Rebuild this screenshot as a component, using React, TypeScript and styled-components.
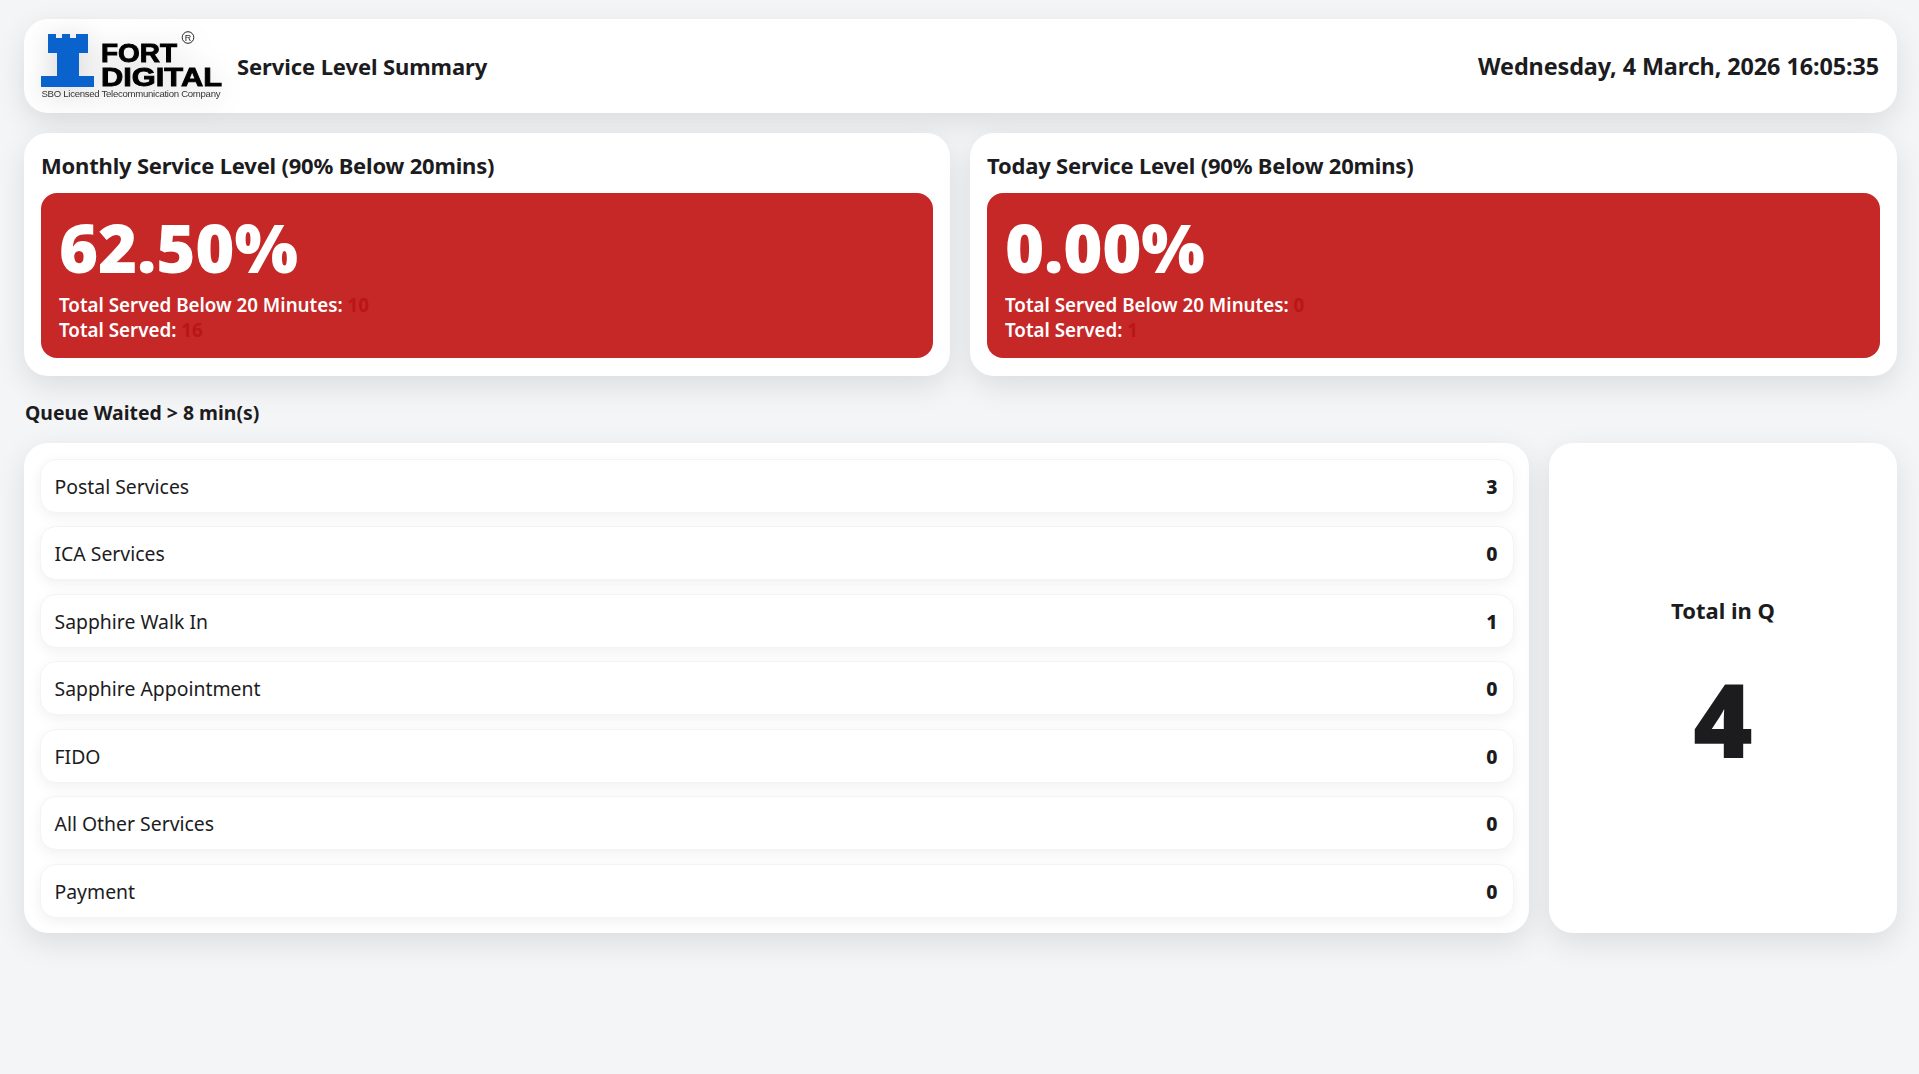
import { createGlobalStyle } from "styled-components";
import styled from "styled-components";

const GlobalStyle = createGlobalStyle`
  html, body {
    margin: 0;
    padding: 0;
    background: #f4f5f7;
    color: #1c1c1e;
    font-family: "Noto Sans", "Open Sans", "Liberation Sans", sans-serif;
  }
`;

const Page = styled.div`
  box-sizing: border-box;
  min-height: 1074px;
  padding: 19px 22px 0 24px;
`;

const Card = styled.section`
  background: #fff;
  border-radius: 24px;
  box-shadow: 0 10px 30px rgba(0, 0, 0, 0.1);
`;

const Header = styled(Card)`
  height: 94px;
  display: flex;
  align-items: center;
  justify-content: space-between;
  padding: 0 18px 0 17px;
`;

const Brand = styled.div`
  display: flex;
  align-items: center;
  gap: 14px;
`;

const LogoBox = styled.div`
  width: 182px;
  height: 72px;
  filter: drop-shadow(0 4px 14px rgba(0, 0, 0, 0.16));
`;

const LogoArt = styled.svg`
  display: block;
  overflow: visible;
`;

const PageTitle = styled.h1`
  margin: 0;
  font-size: 22px;
  font-weight: 700;
  letter-spacing: -0.1px;
`;

const Clock = styled.div`
  font-size: 23.4px;
  font-weight: 700;
  letter-spacing: -0.1px;
`;

const LevelGrid = styled.div`
  display: grid;
  grid-template-columns: 926px 1fr;
  gap: 20px;
  margin-top: 20px;
`;

const LevelCard = styled(Card)`
  padding: 16px 17.5px 18px 17px;
  height: 243px;
  box-sizing: border-box;
`;

const LevelTitle = styled.h2`
  margin: 0 0 11px;
  font-size: 22px;
  line-height: 33px;
  font-weight: 700;
  letter-spacing: -0.2px;
`;

const LevelPanel = styled.div`
  background: #c62828;
  color: #fff;
  border-radius: 16px;
  height: 165px;
  box-sizing: border-box;
  padding: 12px 18px;
`;

const Percent = styled.div`
  font-size: 67px;
  line-height: 84px;
  font-weight: 900;
  letter-spacing: -0.2px;
  margin-bottom: 4px;
`;

const PanelLine = styled.div`
  font-size: 18.8px;
  line-height: 25px;
  font-weight: 600;
`;

const DimValue = styled.span`
  color: #ba1616;
  font-weight: 700;
`;

const QueueHeading = styled.h3`
  margin: 22px 0 15px 1px;
  font-size: 19.4px;
  line-height: 30px;
  font-weight: 700;
`;

const QueueGrid = styled.div`
  display: grid;
  grid-template-columns: 1505px 1fr;
  gap: 20px;
`;

const QueueList = styled(Card)`
  display: flex;
  flex-direction: column;
  gap: 13.6px;
  padding: 15.5px 15.5px 15.5px 16px;
  height: 490px;
  box-sizing: border-box;
`;

const QueueRow = styled.div`
  height: 54px;
  flex: none;
  box-sizing: border-box;
  display: flex;
  align-items: center;
  justify-content: space-between;
  padding: 1px 15px 0 13.5px;
  border-radius: 16px;
  border: 1px solid #f4f4f5;
  background: #fff;
  box-shadow: 0 4px 14px rgba(0, 0, 0, 0.06);
  font-size: 19.4px;
`;

const QueueCount = styled.span`
  font-weight: 800;
`;

const TotalCard = styled(Card)`
  display: flex;
  flex-direction: column;
  align-items: center;
  justify-content: center;
  padding-top: 3px;
`;

const TotalLabel = styled.div`
  font-size: 22px;
  font-weight: 700;
  margin-bottom: 29px;
`;

const TotalValue = styled.div`
  font-size: 102px;
  line-height: 130px;
  font-weight: 900;
`;

const rows = [
  ["Postal Services", 3],
  ["ICA Services", 0],
  ["Sapphire Walk In", 1],
  ["Sapphire Appointment", 0],
  ["FIDO", 0],
  ["All Other Services", 0],
  ["Payment", 0],
] as const;

function Logo() {
  return (
    <LogoArt width="182" height="72" viewBox="41 30 182 72">
      <path
        d="M48 34h8v4h6v-4h8v4h6v-4h12v19h-9v23h15v11H41V76h16V53h-9z"
        fill="#0a62cc"
      />
      <text x="101" y="62" fontFamily="Liberation Sans" fontWeight="700" fontSize="25" textLength="76" lengthAdjust="spacingAndGlyphs" stroke="#000" strokeWidth="0.9">FORT</text>
      <text x="101" y="86" fontFamily="Liberation Sans" fontWeight="700" fontSize="26.5" textLength="121" lengthAdjust="spacingAndGlyphs" stroke="#000" strokeWidth="0.9">DIGITAL</text>
      <text x="41.5" y="97" fontFamily="Liberation Sans" fontSize="9.6" textLength="179" fill="#333">SBO Licensed Telecommunication Company</text>
      <circle cx="188" cy="37.5" r="5.8" fill="none" stroke="#222" strokeWidth="1" />
      <text x="188" y="40.8" textAnchor="middle" fontFamily="Liberation Sans" fontSize="9" fill="#222">R</text>
    </LogoArt>
  );
}

function Level({ title, percent, below, served }: { title: string; percent: string; below: number; served: number }) {
  return (
    <LevelCard>
      <LevelTitle>{title}</LevelTitle>
      <LevelPanel>
        <Percent>{percent}</Percent>
        <PanelLine>
          Total Served Below 20 Minutes: <DimValue>{below}</DimValue>
        </PanelLine>
        <PanelLine>
          Total Served: <DimValue>{served}</DimValue>
        </PanelLine>
      </LevelPanel>
    </LevelCard>
  );
}

export default function App() {
  return (
    <Page>
      <GlobalStyle />
      <Header>
        <Brand>
          <LogoBox>
            <Logo />
          </LogoBox>
          <PageTitle>Service Level Summary</PageTitle>
        </Brand>
        <Clock>Wednesday, 4 March, 2026 16:05:35</Clock>
      </Header>
      <LevelGrid>
        <Level title="Monthly Service Level (90% Below 20mins)" percent="62.50%" below={10} served={16} />
        <Level title="Today Service Level (90% Below 20mins)" percent="0.00%" below={0} served={1} />
      </LevelGrid>
      <QueueHeading>Queue Waited &gt; 8 min(s)</QueueHeading>
      <QueueGrid>
        <QueueList>
          {rows.map(([name, count]) => (
            <QueueRow key={name}>
              <span>{name}</span>
              <QueueCount>{count}</QueueCount>
            </QueueRow>
          ))}
        </QueueList>
        <TotalCard>
          <TotalLabel>Total in Q</TotalLabel>
          <TotalValue>4</TotalValue>
        </TotalCard>
      </QueueGrid>
    </Page>
  );
}
